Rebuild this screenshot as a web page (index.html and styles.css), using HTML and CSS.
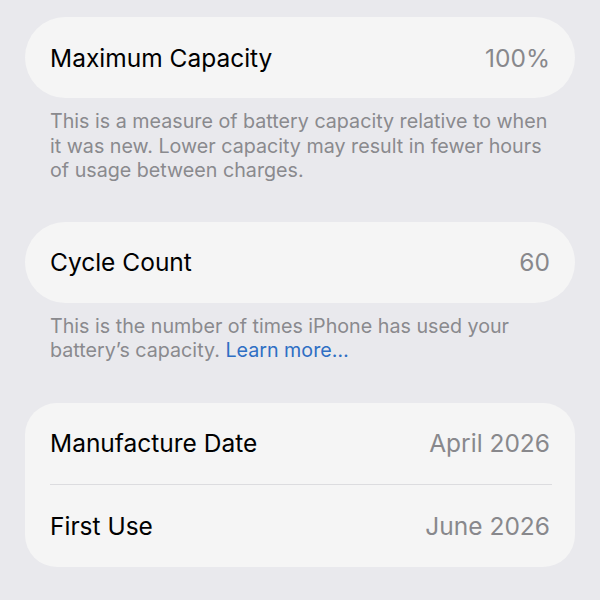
FILE: index.html
```html
<!DOCTYPE html>
<html>
<head>
<meta charset="utf-8">
<link rel="stylesheet" href="styles.css">
</head>
<body>
<main class="page">
  <section class="group">
    <div class="card pill">
      <div class="row"><span class="label">Maximum Capacity</span><span class="value">100%</span></div>
    </div>
    <p class="footer">This is a measure of battery capacity relative to when it was new. Lower capacity may result in fewer hours of usage between charges.</p>
  </section>
  <section class="group">
    <div class="card pill">
      <div class="row"><span class="label">Cycle Count</span><span class="value">60</span></div>
    </div>
    <p class="footer">This is the number of times iPhone has used your battery’s capacity. <span class="link">Learn more…</span></p>
  </section>
  <section class="group group-last">
    <div class="card rounded">
      <div class="row"><span class="label">Manufacture Date</span><span class="value">April 2026</span></div>
      <div class="sep"></div>
      <div class="row row-tall"><span class="label">First Use</span><span class="value">June 2026</span></div>
    </div>
  </section>
</main>
</body>
</html>
```
FILE: styles.css
```css
html, body {
  margin: 0;
  padding: 0;
  background: #e9e9ed;
}
body {
  font-family: Inter, "Noto Sans", sans-serif;
  width: 600px;
  height: 600px;
  overflow: hidden;
}
.page {
  padding: 17px 25px 0 25px;
  display: flex;
  flex-direction: column;
  gap: 39px;
}
.group {
  display: flex;
  flex-direction: column;
}
.group-last {
  margin-top: 1px;
}
.card {
  background: #f5f5f5;
  display: flex;
  flex-direction: column;
}
.pill {
  border-radius: 41px;
}
.rounded {
  border-radius: 32px;
}
.row {
  height: 81px;
  display: flex;
  align-items: center;
  justify-content: space-between;
  padding: 0 25px;
  font-size: 24.5px;
}
.row-tall {
  height: 82px;
}
.label {
  color: #000;
}
.value {
  color: #88888c;
}
.sep {
  height: 1px;
  background: #dcdcdf;
  margin: 0 23px 0 25px;
}
.footer {
  margin: 11px 0 0 0;
  padding: 0 25px;
  font-size: 19.7px;
  line-height: 24.5px;
  color: #8a8a8e;
}
.link {
  color: #2f6fc4;
}
```
